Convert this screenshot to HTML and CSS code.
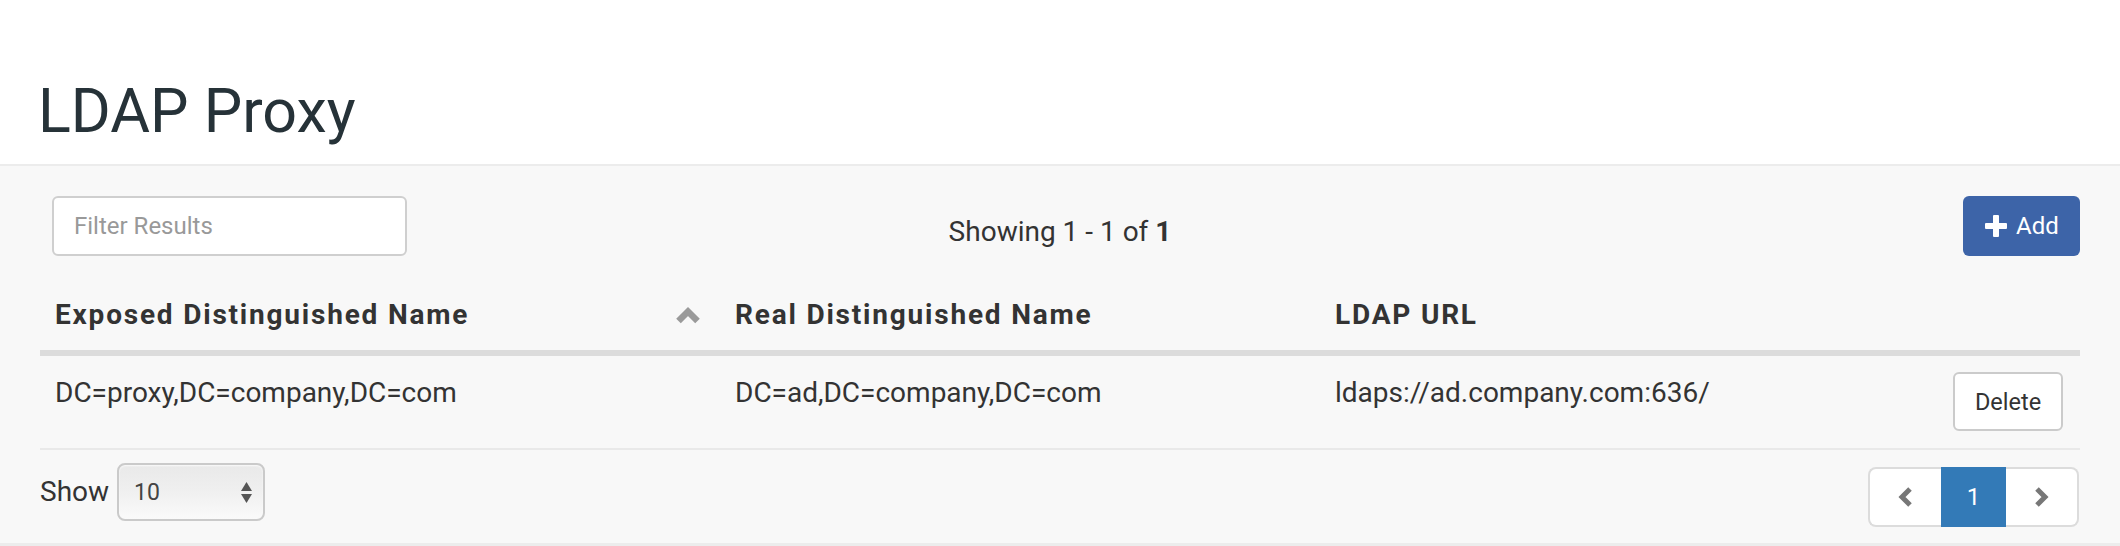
FILE: index.html
```html
<!DOCTYPE html>
<html>
<head>
<meta charset="utf-8">
<title>LDAP Proxy</title>
<link rel="stylesheet" href="styles.css">
</head>
<body>
<div class="page-header">
  <h1 class="title">LDAP Proxy</h1>
</div>
<div class="panel">
  <div class="toolbar">
    <input class="filter" type="text" placeholder="Filter Results">
    <div class="showing">Showing 1 - 1 of <b>1</b></div>
    <button class="btn-add"><svg class="plus" width="22" height="22" viewBox="0 0 22 22"><rect x="0" y="8" width="22" height="6" rx="1"/><rect x="8" y="0" width="6" height="22" rx="1"/></svg><span>Add</span></button>
  </div>
  <table class="grid">
    <thead>
      <tr>
        <th class="c1"><div class="th-inner"><span>Exposed Distinguished Name</span><svg class="sort" width="26" height="18" viewBox="0 0 26 18"><polyline points="3.5,15 13,5.5 22.5,15"/></svg></div></th>
        <th class="c2">Real Distinguished Name</th>
        <th class="c3">LDAP URL</th>
        <th class="c4"></th>
      </tr>
    </thead>
    <tbody>
      <tr>
        <td class="c1">DC=proxy,DC=company,DC=com</td>
        <td class="c2">DC=ad,DC=company,DC=com</td>
        <td class="c3">ldaps://ad.company.com:636/</td>
        <td class="c4"><button class="btn-delete">Delete</button></td>
      </tr>
    </tbody>
  </table>
  <div class="footer">
    <div class="show">
      <span class="show-label">Show</span>
      <div class="select"><span>10</span><svg class="updown" width="11" height="21" viewBox="0 0 11 21"><polygon points="5.5,0 11,9 0,9"/><polygon points="0,12 11,12 5.5,21"/></svg></div>
    </div>
    <ul class="pagination">
      <li class="page prev"><svg width="15" height="22" viewBox="0 0 15 22"><polyline points="12,3 4,11 12,19"/></svg></li>
      <li class="page active">1</li>
      <li class="page next"><svg width="15" height="22" viewBox="0 0 15 22"><polyline points="3,3 11,11 3,19"/></svg></li>
    </ul>
  </div>
</div>
</body>
</html>
```
FILE: styles.css
```css
* { box-sizing: border-box; }
html, body { margin: 0; padding: 0; background: #fff; }
body {
  font-family: Roboto, "Liberation Sans", Arial, sans-serif;
  color: #333;
  font-size: 28px;
}
.page-header {
  padding: 75px 40px 17px;
  border-bottom: 2px solid #ececec;
  background: #fff;
}
.title {
  margin: 0 0 0 -2px;
  font-size: 61px;
  line-height: 72px;
  font-weight: 400;
  color: #263238;
}
.panel {
  background: #f8f8f8;
  padding: 0 40px;
  border-bottom: 3px solid #ececec;
}
.toolbar {
  display: grid;
  grid-template-columns: 1fr auto 1fr;
  align-items: start;
  padding-top: 30px;
  height: 90px;
}
.filter {
  margin-left: 12px;
  width: 355px;
  height: 60px;
  border: 2px solid #cfcfcf;
  border-radius: 6px;
  background: #fff;
  padding: 0 20px;
  font-family: Roboto, "Liberation Sans", Arial, sans-serif;
  font-size: 24px;
  color: #333;
  outline: none;
}
.filter::placeholder { color: #999; }
.showing {
  margin-top: 20px;
  line-height: 32px;
  font-size: 28px;
  color: #333;
}
.showing b { font-weight: 700; }
.btn-add {
  justify-self: end;
  width: 117px;
  height: 60px;
  background: #3d64a8;
  border: none;
  border-radius: 6px;
  color: #fff;
  display: flex;
  align-items: center;
  padding: 0 0 0 22px;
  gap: 9px;
  font-family: Roboto, "Liberation Sans", Arial, sans-serif;
  font-size: 24px;
}
.plus { fill: #fff; display: block; }
.grid {
  margin-top: 24px;
  width: 100%;
  border-collapse: collapse;
  table-layout: fixed;
}
.grid th {
  text-align: left;
  font-weight: 700;
  font-size: 28px;
  letter-spacing: 1.8px;
  line-height: 32px;
  padding: 19px 15px 19px;
  border-bottom: 6px solid #dcdcdc;
  color: #333;
  vertical-align: middle;
}
.grid th.c1 { padding-right: 19px; }
.c1 { width: 680px; }
.c2 { width: 600px; }
.c4 { width: 180px; }
.th-inner {
  display: flex;
  justify-content: space-between;
  align-items: center;
}
.sort { display: block; fill: none; stroke: #9a9a9a; stroke-width: 6.5; }
.grid td {
  vertical-align: top;
  padding: 16px 15px 17px;
  line-height: 42px;
  font-size: 28px;
  color: #333;
  border-bottom: 2px solid #e9e9e9;
}
.grid td.c4 { text-align: right; padding-right: 17px; }
.btn-delete {
  width: 110px;
  height: 59px;
  background: #fff;
  border: 2px solid #cbcbcb;
  border-radius: 6px;
  font-family: Roboto, "Liberation Sans", Arial, sans-serif;
  font-size: 23.5px;
  color: #333;
  padding: 0;
  vertical-align: top;
}
.footer {
  display: flex;
  justify-content: space-between;
  align-items: flex-start;
  height: 93px;
}
.show {
  display: flex;
  align-items: center;
  gap: 8px;
  margin-top: 13px;
}
.show-label { font-size: 28px; line-height: 32px; color: #333; }
.select {
  width: 148px;
  height: 58px;
  border: 2px solid #cacaca;
  border-radius: 8px;
  background: linear-gradient(to bottom, #e9e9e9 0%, #efefef 45%, #fafafa 100%);
  box-shadow: inset 0 1px 2px rgba(255,255,255,0.8);
  display: flex;
  align-items: center;
  justify-content: space-between;
  padding: 0 11px 0 15px;
  font-size: 23px;
  color: #444;
}
.updown { fill: #555; display: block; }
.pagination {
  list-style: none;
  margin: 17px 1px 0 0;
  padding: 0;
  display: flex;
}
.page {
  height: 60px;
  display: flex;
  align-items: center;
  justify-content: center;
  background: #fff;
  border: 2px solid #dcdcdc;
}
.page svg { display: block; fill: none; stroke: #777; stroke-width: 5; }
.prev { width: 73px; border-right: none; border-radius: 8px 0 0 8px; }
.next { width: 73px; border-left: none; border-radius: 0 8px 8px 0; }
.active {
  width: 65px;
  background: #337ab7;
  border-color: #337ab7;
  color: #fff;
  font-size: 24px;
}
```
